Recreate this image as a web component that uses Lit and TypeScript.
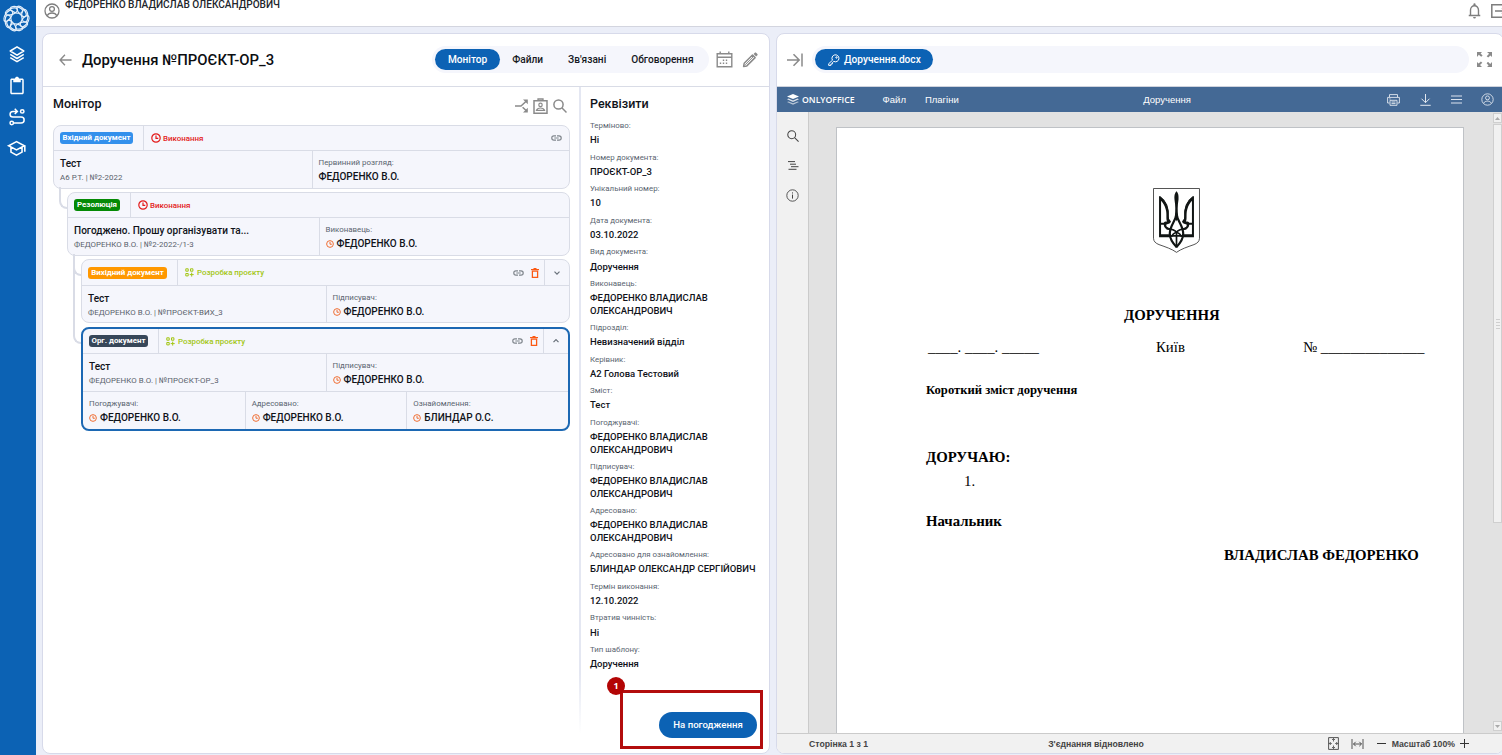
import { LitElement, html, css, svg, TemplateResult } from "lit";
import { customElement } from "lit/decorators.js";
import { classMap } from "lit/directives/class-map.js";

/* ---------- icons ---------- */

const glyph = (cls: string, box: string, body: unknown) =>
  html`<svg class="ico ${cls}" viewBox=${box} preserveAspectRatio="none">${body}</svg>`;

const logo = () =>
  glyph("logo", "-14 -14 28 28", svg`<g fill="none" stroke="#e4effb" stroke-width="1.3">
    ${[0, 36, 72, 108, 144, 180, 216, 252, 288, 324].map(
      (a) => svg`<ellipse cx="0" cy="-9" rx="6.600" ry="3.200" transform=${`rotate(${a}) rotate(14 0 -9)`}></ellipse>`
    )}</g>`);

const layers = () =>
  glyph("i18", "0 0 24 24", svg`<path fill="none" stroke="currentColor" stroke-width="2" stroke-linejoin="round"
    d="M12 2.5L21 8l-9 5.5L3 8zM3 12.5l9 5.5 9-5.5M3 16.8l9 5.5 9-5.5"></path>`);

const clipboard = () =>
  glyph("i20", "0 0 24 24", svg`<path fill="currentColor"
    d="M19 3h-4.2C14.4 1.8 13.3 1 12 1s-2.4.8-2.8 2H5c-1.1 0-2 .9-2 2v16c0 1.100.9 2 2 2h14c1.100 0 2-.9 2-2V5c0-1.100-.9-2-2-2zm0 18H5V5h2v3h10V5h2z"></path>`);

const route = () =>
  glyph("i18", "0 0 24 24", svg`<g fill="none" stroke="currentColor" stroke-width="2">
    <path d="M11 4.500H6.500a3.700 3.700 0 0 0 0 7.500h11a4 4 0 0 1 0 8H8M9 1l3.500 3.500L9 8"></path>
    <circle cx="19" cy="4.500" r="2.300"></circle><circle cx="5" cy="20" r="2.300"></circle></g>`);

const cap = () =>
  glyph("i19", "0 0 24 24", svg`<g fill="none" stroke="currentColor" stroke-width="2">
    <path d="M12 3.500L2 9l10 5.500L22 9zM5 11v6.500l7 4 7-4V11M22.500 9v8"></path></g>`);

const account = (cls: string, w = 1.9) =>
  glyph(cls, "0 0 24 24", svg`<g fill="none" stroke="currentColor" stroke-width=${w}>
    <circle cx="12" cy="12" r="10.500"></circle><circle cx="12" cy="9" r="3.600"></circle>
    <path d="M4.800 19c1.500-2.800 4-4 7.200-4s5.700 1.200 7.200 4"></path></g>`);

const back = () =>
  glyph("back-ico", "0 0 14 12", svg`<path fill="none" stroke="currentColor" stroke-width="1.500" d="M13.500 6H1.200M6.400.7L1.200 6l5.200 5.300"></path>`);

const toBar = () =>
  glyph("bar-ico", "0 0 16 14", svg`<path fill="none" stroke="currentColor" stroke-width="1.500" d="M0 7h12M6.500 1.200L12.200 7l-5.700 5.800M15 .5v13"></path>`);

const calendar = () =>
  glyph("cal-ico", "0 0 17 17", svg`<path fill="none" stroke="currentColor" stroke-width="1.400" d="M1.200 2.700h14.600v13H1.200zM1.200 6.300h14.600M4.200.5v2.500M12.800.5v2.500"></path>
    <path fill="none" stroke="currentColor" stroke-width="1.400" stroke-dasharray="1.400 1.600" d="M6.800 9.300h6M3.800 12.300h7.500"></path>`);

const pencil = () =>
  glyph("pen-ico", "0 0 16 16", svg`<path fill="none" stroke="currentColor" stroke-width="1.500" stroke-linejoin="round" d="M1.600 14.400l.6-3.100 8.300-8.300 2.600 2.600-8.300 8.300z"></path>
    <path fill="currentColor" d="M11.600 2l1.200-1.300c.4-.4.9-.4 1.300 0l1.300 1.300c.4.4.4.9 0 1.300l-1.300 1.200z"></path>
    <path stroke="currentColor" stroke-width=".9" d="M3.200 12.800l7.800-7.800"></path>`);

const split = () =>
  glyph("split-ico", "0 0 13 14", svg`<path fill="none" stroke="currentColor" stroke-width="1.500" d="M0 7h6l6-5.500M7.600 8.200L12 12.300"></path>
    <path fill="currentColor" d="M8 .5h4.800v4.800zM12.800 8.700v4.800H8z"></path>`);

const idBadge = () =>
  glyph("id-ico", "0 0 15 16", svg`<path fill="none" stroke="currentColor" stroke-width="1.500" d="M1 2.800h13v12.400H1z"></path>
    <path fill="none" stroke="currentColor" stroke-width="1.300" d="M5 2.500V1h5v1.500"></path>
    <circle cx="7.500" cy="6.900" r="1.700" fill="none" stroke="currentColor" stroke-width="1.200"></circle>
    <path fill="none" stroke="currentColor" stroke-width="1.200" d="M3.500 12.300c.6-1.700 2-2.300 4-2.300s3.400.6 4 2.300z"></path>`);

const search = (cls: string, w: number) =>
  glyph(cls, "0 0 14 14", svg`<g fill="none" stroke="currentColor" stroke-width=${w}><circle cx="5.500" cy="5.500" r="4.600"></circle><path d="M8.800 8.800l4.700 4.700"></path></g>`);

const link = () =>
  glyph("link-ico", "0 0 11 6", svg`<path fill="none" stroke="currentColor" stroke-width="1.200" d="M5 .8H3a2.200 2.200 0 0 0 0 4.400h2M6 .8h2a2.200 2.200 0 0 1 0 4.400H6M3.300 3h4.400"></path>`);

const trash = () =>
  glyph("trash-ico", "0 0 8 10", svg`<path fill="none" stroke="currentColor" stroke-width="1.300" d="M1.400 3v6.300h5.200V3"></path>
    <path stroke="currentColor" stroke-width="1.300" d="M0 1.600h8"></path><path stroke="currentColor" stroke-width="1.200" d="M2.500.6h3M1 3.100h6"></path>`);

const chevron = (up: boolean) =>
  glyph("chev-ico", "0 0 8 6", svg`<path fill="none" stroke="#68707a" stroke-width="1.200" d=${up ? "M1.500 4.200L4 1.700l2.500 2.500" : "M1.500 1.700L4 4.200l2.500-2.500"}></path>`);

const clock = (cls: string) =>
  glyph(cls, "0 0 10 10", svg`<g fill="none" stroke="currentColor" stroke-width="1.200"><circle cx="5" cy="5" r="4.200"></circle><path d="M5 2.400V5.300h2.300"></path></g>`);

const widgets = () =>
  glyph("wid-ico", "0 0 9 9", svg`<path fill="none" stroke="currentColor" stroke-width="1" d="M.8.8h2.400v2.400H.8zM5.500.8h2.400v2.400H5.500zM.8 5.500h2.400v2.400H.8zM6.700 4.600v4M4.700 6.600h4"></path>`);

const key = () =>
  glyph("key-ico", "0 0 12 12", svg`<g fill="none" stroke="currentColor" stroke-width="1"><path d="M4.500 6.200L.7 9.700v1.700h2.200V10h1.400V8.700l1.500-1.300A3.500 3.500 0 1 0 4.500 6.200z"></path><circle cx="8.500" cy="3.500" r=".7"></circle></g>`);

const bell = () =>
  glyph("bell-ico", "0 0 14 16", svg`<path fill="none" stroke="currentColor" stroke-width="1.500" d="M.8 12.600h12.400M2.700 12.500V7a4.300 4.300 0 0 1 8.600 0v5.500"></path>
    <path fill="currentColor" d="M5.800 2.800V1.400a1.200 1.200 0 0 1 2.400 0v1.400zM5.500 14h3a1.500 1.500 0 0 1-3 0z"></path>`);

const exit = () =>
  glyph("exit-ico", "0 0 16 14", svg`<path fill="none" stroke="currentColor" stroke-width="1.500" d="M13 4V.8H.8v12.400H13V10M4 7h10M11 4.200L14 7l-3 2.800"></path>`);

const expand = () =>
  glyph("expand-ico", "0 0 15 15", svg`<g fill="currentColor"><path d="M0 0h5L3.600 1.400l2 2-1.400 1.400-2.400-2L0 5zM15 0v5l-1.600-1.600-2.200 2.200-1.500-1.400 2.400-2.400L10 0zM0 15v-5l1.600 1.600 2.300-2.200 1.400 1.400-2.300 2.300L5 15zM15 15h-5l1.600-1.600-2-2.200 1.400-1.500 2.200 2.400L15 10z"></path></g>`);

const stack = () =>
  glyph("stack-ico", "0 0 12 11", svg`<g fill="#fff"><path d="M6 0l6 2.500L6 5 0 2.500z"></path><path opacity=".8" d="M1.500 4.600L6 6.500l4.500-1.900L12 5.300 6 7.900 0 5.300z"></path><path opacity=".6" d="M1.500 7.400L6 9.300l4.500-1.900L12 8.100 6 10.700 0 8.100z"></path></g>`);

const printer = () =>
  glyph("print-ico", "0 0 13 12", svg`<g fill="none" stroke="#e3e9f1" stroke-width=".9"><path d="M2.500 3V.6h8V3M2.500 9H.6V3.400h11.800V9h-1.900"></path><path d="M3 6.300h7v5H3z"></path><path d="M4.500 8h4M4.500 9.600h4M2.300 4.900h1.200"></path></g>`);

const download = () =>
  glyph("down-ico", "0 0 11 12", svg`<path fill="none" stroke="#e3e9f1" stroke-width="1" d="M5.500 0v8.500M1.500 4.700l4 4 4-4M.3 11.300h10.400"></path>`);

const lines = () =>
  glyph("menu-ico", "0 0 11 9", svg`<path fill="none" stroke="#dbe3ee" stroke-width="1" d="M0 1h11M0 4.500h11M0 8h11"></path>`);

const outline = () =>
  glyph("outline-ico", "0 0 12 9", svg`<path fill="none" stroke="#444" stroke-width="1" d="M1 .6h7M3 3.200h6M4 5.700h7.500M1.500 8.300h8"></path>`);

const info = () =>
  glyph("info-ico", "0 0 13 13", svg`<circle cx="6.500" cy="6.500" r="5.700" fill="none" stroke="#444" stroke-width=".9"></circle><path stroke="#444" stroke-width="1" d="M6.500 5.600v4M6.500 3.400v1.100"></path>`);

const fitPage = () =>
  glyph("fit-ico", "0 0 11 13", svg`<path fill="none" stroke="#444" stroke-width=".9" d="M.6.600h9.800v11.800H.6z"></path>
    <path fill="none" stroke="#444" stroke-width=".8" d="M5.500 1.500v3M5.500 11.500v-3M1.300 6.500h2.500M9.700 6.500H7.200M4 3l1.500-1.500L7 3M4 10l1.500 1.500L7 10M2.800 5L1.300 6.500 2.800 8M8.200 5l1.500 1.500L8.200 8"></path>`);

const fitWidth = () =>
  glyph("fitw-ico", "0 0 13 10", svg`<path fill="none" stroke="#444" stroke-width=".9" d="M1 0v10M12 0v10M2.500 5h8M4.700 2.800L2.500 5l2.200 2.200M8.300 2.800L10.500 5 8.300 7.200"></path>`);

/* Coat of arms: the right half mirrors the left one. */
const emblem = () => {
  const half = svg`
    <path fill="#111514" d="M18 24C36 34 48 58 47 84C47 93 49 96 52 98C54 106 46 108 40 109C38 116 44 118 52 120L50 126C38 124 32 118 32 110H24V138H50V147H18ZM24 38V104H32C33 101 36 100 42 100C38 92 42 78 38 64C35 53 30 44 24 38Z"></path>
    <path fill="none" stroke="#111514" stroke-width="6.500" d="M69 82C66 100 50 114 50 136C50 154 60 166 70 176"></path>
    <path fill="none" stroke="#111514" stroke-width="5" d="M40 121C56 122 66 126 70 132C60 136 56 142 55 146"></path>
    <path fill="none" stroke="#111514" stroke-width="3" d="M20 25C38 38 48 60 45 86C45 94 48 98 52 102"></path>`;
  return glyph("emblem", "0 0 140 194", svg`
    <path fill="#fff" stroke="#333" stroke-width="2.500" d="M1.500 1.500H138.500V150C138 160 132 165 122 169C102 176 84 182 70 192C56 182 38 176 18 169C8 165 2 160 1.500 150Z"></path>
    ${half}<g transform="translate(140 0) scale(-1 1)">${half}</g>
    <path fill="#111514" d="M70 10C66 14 63 20 64 34C67 54 67 66 65 84L70 100L75 84C73 66 73 54 76 34C77 20 74 14 70 10Z"></path>
    <path stroke="#111514" stroke-width="5" d="M70 128V178M44 143H96"></path>`);
};

/* ---------- data ---------- */

interface Person { label: string; name: string; pending?: boolean }
interface Card {
  depth: number; tone: string; badge: string; badgeWidth: number;
  status: "run" | "draft"; title: string; sub: string;
  person: Person; tools: string[]; open?: boolean; extra?: Person[];
}

const F = "ФЕДОРЕНКО В.О.";
const cards: Card[] = [
  { depth: 0, tone: "blue", badge: "Вхідний документ", badgeWidth: 73, status: "run", title: "Тест", sub: "А6 Р.Т. | №2-2022",
    person: { label: "Первинний розгляд:", name: F }, tools: ["link"] },
  { depth: 1, tone: "green", badge: "Резолюція", badgeWidth: 46, status: "run", title: "Погоджено. Прошу організувати та...", sub: "ФЕДОРЕНКО В.О. | №2-2022-/1-3",
    person: { label: "Виконавець:", name: F, pending: true }, tools: [] },
  { depth: 2, tone: "orange", badge: "Вихідний документ", badgeWidth: 79, status: "draft", title: "Тест", sub: "ФЕДОРЕНКО В.О. | №ПРОЄКТ-ВИХ_3",
    person: { label: "Підписувач:", name: F, pending: true }, tools: ["link", "trash", "chevron"] },
  { depth: 2, tone: "slate", badge: "Орг. документ", badgeWidth: 59, status: "draft", title: "Тест", sub: "ФЕДОРЕНКО В.О. | №ПРОЄКТ-ОР_3",
    person: { label: "Підписувач:", name: F, pending: true }, tools: ["link", "trash", "chevron"], open: true,
    extra: [
      { label: "Погоджувачі:", name: F, pending: true },
      { label: "Адресовано:", name: F, pending: true },
      { label: "Ознайомлення:", name: "БЛИНДАР О.С.", pending: true },
    ] },
];

const FULL = "ФЕДОРЕНКО ВЛАДИСЛАВ ОЛЕКСАНДРОВИЧ";
const details: [string, string][] = [
  ["Терміново:", "Ні"],
  ["Номер документа:", "ПРОЄКТ-ОР_3"],
  ["Унікальний номер:", "10"],
  ["Дата документа:", "03.10.2022"],
  ["Вид документа:", "Доручення"],
  ["Виконавець:", FULL],
  ["Підрозділ:", "Невизначений відділ"],
  ["Керівник:", "А2 Голова Тестовий"],
  ["Зміст:", "Тест"],
  ["Погоджувачі:", FULL],
  ["Підписувач:", FULL],
  ["Адресовано:", FULL],
  ["Адресовано для ознайомлення:", "БЛИНДАР ОЛЕКСАНДР СЕРГІЙОВИЧ"],
  ["Термін виконання:", "12.10.2022"],
  ["Втратив чинність:", "Ні"],
  ["Тип шаблону:", "Доручення"],
];

const base = css`
  * { box-sizing: border-box; }
  .ico { display: block; flex: none; overflow: visible; }
`;

/* ---------- document tree ---------- */

@customElement("document-card")
class DocumentCard extends LitElement {
  static properties = { card: { attribute: false } };
  declare card: Card;

  static styles = [base, css`
    :host { display: block; }
    .card { background: #f5f6fc; border: 1px solid #d9dce6; border-radius: 8px; overflow: hidden; }
    .card.open { border: 2px solid #1c68b3; }
    .head { display: flex; height: 25px; border-bottom: 1px solid #d9dce6; align-items: stretch; }
    .card.draft:not(.open) .head { height: 26px; }
    .type { display: flex; align-items: center; padding: 0 10px 0 6px; border-right: 1px solid #d9dce6; }
    .badge { height: 12px; border-radius: 3px; color: #fff; font-size: 7.9px; font-weight: 700; line-height: 12px; text-align: center; white-space: nowrap; }
    .blue { background: #3390ec; }
    .green { background: #058a05; }
    .orange { background: #ff9800; }
    .slate { background: #374759; }
    .status { display: flex; align-items: center; gap: 2px; padding-left: 7px; font-size: 7.9px; font-weight: 500; flex: 1; }
    .run { color: #e31b1b; }
    .draft-status { color: #a3c614; gap: 3px; }
    .tools { display: flex; align-items: center; gap: 7px; padding-right: 7px; color: #7f858c; }
    .tools.wide { padding-right: 5px; }
    .trash { color: #fb5a14; }
    .toggle { display: flex; align-items: center; justify-content: center; width: 25px; border-left: 1px solid #d9dce6; }
    .row { display: grid; grid-template-columns: 1fr 1fr; height: 37px; }
    .card.draft:not(.open) .row { height: 36px; }
    .open .main { height: 38px; border-bottom: 1px solid #d9dce6; }
    .three { grid-template-columns: 1fr 1fr 1fr; }
    .cell { padding: 5.500px 6px 0; min-width: 0; white-space: nowrap; }
    .cell + .cell { border-left: 1px solid #d9dce6; }
    .title { font-size: 10.050px; line-height: 14px; color: #10131a; font-weight: 500; }
    .sub { font-size: 7.9px; line-height: 13px; color: #59616b; letter-spacing: .05px; }
    .label { font-size: 7.9px; line-height: 12px; color: #59646f; }
    .name { display: flex; align-items: center; gap: 3px; font-size: 10px; line-height: 16px; color: #10131a; font-weight: 500; }
    .link-ico { width: 11px; height: 6px; }
    .trash-ico { width: 8px; height: 10px; }
    .chev-ico { width: 8px; height: 6px; }
    .clock10 { width: 10px; height: 10px; }
    .clock8 { width: 8px; height: 8px; color: #ef6a2c; }
    .wid-ico { width: 9px; height: 9px; }
  `];

  private person(p: Person) {
    return html`<div class="cell"><div class="label">${p.label}</div>
      <div class="name">${p.pending ? clock("clock8") : null}<span>${p.name}</span></div></div>`;
  }

  render() {
    const c = this.card;
    const full = c.tools.includes("chevron");
    return html`<div class=${classMap({ card: true, open: !!c.open, draft: c.status === "draft" })}>
      <div class="head">
        <div class="type"><div class="badge ${c.tone}" style="width:${c.badgeWidth}px">${c.badge}</div></div>
        ${c.status === "run"
          ? html`<div class="status run">${clock("clock10")}<span>Виконання</span></div>`
          : html`<div class="status draft-status">${widgets()}<span>Розробка проєкту</span></div>`}
        <div class=${classMap({ tools: true, wide: full })}>
          ${c.tools.includes("link") ? link() : null}
          ${c.tools.includes("trash") ? html`<span class="trash">${trash()}</span>` : null}
        </div>
        ${full ? html`<div class="toggle">${chevron(!!c.open)}</div>` : null}
      </div>
      <div class="row main">
        <div class="cell"><div class="title">${c.title}</div><div class="sub">${c.sub}</div></div>
        ${this.person(c.person)}
      </div>
      ${c.extra ? html`<div class="row three">${c.extra.map((p) => this.person(p))}</div>` : null}
    </div>`;
  }
}

/* ---------- application ---------- */

@customElement("app-root")
class AppRoot extends LitElement {
  static styles = [base, css`
    :host { display: block; width: 100%; height: 755px; overflow: hidden; font-family: Roboto, "Noto Sans", sans-serif; color: #10131a; }
    .app { display: grid; grid-template-columns: 36px 1fr; height: 755px; background: #ebeef8; }
    .side { background: #0c62b4; color: #fff; display: flex; flex-direction: column; align-items: center; padding: 5px 3px 0 0; }
    .logo { width: 27px; height: 27px; margin-bottom: 1px; }
    .nav { display: flex; flex-direction: column; align-items: center; gap: 13px; padding-top: 12px; }
    .i18 { width: 18px; height: 18px; }
    .i19 { width: 19px; height: 18px; }
    .i20 { width: 18px; height: 19px; }
    .content { display: flex; flex-direction: column; min-width: 0; }
    .top { height: 27px; background: #fff; border-bottom: 1px solid #d3d5df; display: flex; color: #7d7d7d; padding-left: 8px; overflow-x: clip; }
    .user-ico { width: 16px; height: 16px; margin-top: 3px; }
    .user { margin-left: 5px; font-size: 10.100px; font-weight: 500; line-height: 9px; color: #22262c; flex: 1; letter-spacing: -.02px; }
    .bell-ico { width: 13px; height: 16px; margin: 3px 10px 0 0; }
    .exit-ico { width: 16px; height: 14px; margin: 4px -5px 0 0; }
    .panels { display: grid; grid-template-columns: 728px 1fr; gap: 6px; padding: 6px 0 1px 6px; flex: 1; min-height: 0; }
    .panel { background: #fff; border: 1px solid #d7daea; border-radius: 8px; min-width: 0; display: flex; flex-direction: column; overflow: hidden; }
    .right { margin-right: -2px; }
    .bar { height: 53px; flex: none; border-bottom: 1px solid #d9dce6; display: flex; align-items: center; color: #8a8a8a; }
    .left .bar { padding: 0 11px 1px 16px; }
    .back-ico { width: 13px; height: 12px; }
    .h1 { font-size: 14.870px; font-weight: 500; color: #0c0e12; margin-left: 10px; flex: 1; white-space: nowrap; }
    .tabs { display: flex; align-items: center; height: 27px; background: #f5f6fc; border-radius: 14px; padding: 0 3px; }
    .tab { height: 21px; line-height: 21px; padding: 0 12.500px; border-radius: 11px; font-size: 10.150px; font-weight: 500; color: #16191f; white-space: nowrap; }
    .tab.on { background: #0c62b4; color: #fff; }
    .cal-ico { width: 17px; height: 17px; margin-left: 7px; }
    .pen-ico { width: 16px; height: 16px; margin-left: 9px; }
    .body { flex: 1; display: grid; grid-template-columns: 536px 1fr; min-height: 0; }
    .monitor { padding: 9px 9px 0 10px; }
    .section { font-size: 12.500px; font-weight: 500; line-height: 15px; }
    .section-row { display: flex; justify-content: space-between; height: 29px; }
    .acts { display: flex; color: #8a8a8a; gap: 5px; padding: 2px 3px 0 0; }
    .split-ico { width: 13px; height: 14px; margin-top: 1px; }
    .id-ico { width: 15px; height: 16px; }
    .search-l { width: 14px; height: 14px; margin-top: 1px; }
    .tree { display: flex; flex-direction: column; gap: 3px; }
    .node { position: relative; }
    .d1 { margin-left: 14px; }
    .d2 { margin-left: 28px; }
    .last { margin-top: 1px; }
    .node.d1::before, .node.d2::before { content: ""; position: absolute; left: -8px; bottom: calc(100% - 17px); width: 10px; height: 20px; border-left: 2px solid #d9dce6; border-bottom: 2px solid #d9dce6; border-bottom-left-radius: 8px; }
    .node.last::before { height: 88px; }
    document-card { position: relative; }
    .details { border-left: 2px solid; border-image: linear-gradient(#e4e7f2 88%, #fff 97%) 1; padding: 9px 8px 0 9px; display: flex; flex-direction: column; position: relative; }
    .list { padding-top: 9px; display: flex; flex-direction: column; }
    .field { padding-bottom: 4.700px; }
    .k { font-size: 7.900px; line-height: 11px; color: #5a6570; height: 13.700px; }
    .v { font-size: 9.500px; line-height: 12.600px; font-weight: 500; padding-top: .6px; }
    .submit { position: absolute; right: 12px; bottom: 15px; width: 98px; height: 26px; line-height: 26px; border-radius: 13px; background: #0c62b4; color: #fff; font-size: 9.600px; font-weight: 500; text-align: center; white-space: nowrap; }
    .mark { position: absolute; right: 6px; bottom: 4px; width: 143px; height: 59px; border: 3px solid #b30d0d; }
    .count { position: absolute; left: -16px; top: -16px; width: 18px; height: 18px; border-radius: 50%; background: #b30505; color: #fff; font: 700 9px/18px "Open Sans", sans-serif; text-align: center; }

    .right .bar { padding: 0 10px 1px 10px; border-bottom-color: #cfd3dd; }
    .bar-ico { width: 16px; height: 14px; }
    .files { flex: 1; margin: 0 8px 0 9px; }
    .file { display: flex; align-items: center; gap: 4px; width: 118px; padding: 0 0 0 13px; }
    .key-ico { width: 12px; height: 12px; }
    .expand-ico { width: 15px; height: 15px; margin-right: 1px; }
    .office { height: 25px; flex: none; background: #446995; color: #fff; display: grid; grid-template-columns: 1fr auto 1fr; align-items: center; font: 9.500px "Liberation Sans", Arial, sans-serif; padding: 0 9px 0 10px; }
    .doc-name { padding-left: 53px; }
    .menu { display: flex; align-items: center; }
    .stack-ico { width: 12px; height: 11px; }
    .brand { font: 600 8.700px "Open Sans", sans-serif; margin: 0 28px 0 3px; }
    .menu .item { margin-right: 19px; }
    .office-acts { display: flex; align-items: center; justify-content: flex-end; }
    .print-ico { width: 13px; height: 12px; margin-right: 20px; }
    .down-ico { width: 11px; height: 12px; margin-right: 20px; }
    .menu-ico { width: 11px; height: 9px; margin-right: 19px; }
    .acc13 { width: 13px; height: 13px; color: #e3e9f1; }
    .work { flex: 1; display: grid; grid-template-columns: 32px 1fr; min-height: 0; }
    .strip { background: #f1f1f1; border-right: 1px solid #cbcbcb; display: flex; flex-direction: column; align-items: center; padding-top: 18px; color: #444; }
    .search-s { width: 12px; height: 12px; }
    .outline-ico { width: 12px; height: 9px; margin-top: 19px; }
    .info-ico { width: 13px; height: 13px; margin-top: 19px; }
    .canvas { background: #e2e2e2; display: grid; grid-template-columns: 1fr 9px; padding: 0 1px 0 27px; min-height: 0; overflow: hidden; }
    .page { width: 628px; margin-top: 15px; background: #fff; border: 1px solid #bfc2c6; border-bottom: 0; padding: 60px 0 0 89px; font-family: "Liberation Serif", "Times New Roman", serif; color: #000; font-size: 14.800px; line-height: 18px; display: flex; flex-direction: column; align-items: flex-start; }
    .emblem { width: 47px; height: 65px; margin-left: 227px; }
    .doc-title { font-weight: 700; margin: 53px 0 0 198px; }
    .issue { display: flex; margin-top: 14px; width: 500px; white-space: pre; }
    .issue .date { width: 230px; padding-left: 2px; }
    .issue .city { width: 147px; }
    .short { font-size: 12.650px; font-weight: 700; margin-top: 25px; }
    .order { font-weight: 700; margin-top: 49px; }
    .point { margin: 6px 0 0 38px; }
    .boss { font-weight: 700; margin-top: 22px; }
    .sign { font-weight: 700; margin: 16px 0 0 298px; white-space: nowrap; }
    .scroll { display: flex; flex-direction: column; padding: 1px 0 2px; }
    .arrow { height: 10px; border: 1px solid #cfcfcf; background: #f1f1f1; display: flex; align-items: center; justify-content: center; flex: none; }
    .tri { width: 5px; height: 3px; }
    .thumb { height: 399px; margin: 1px 0 auto; border: 1px solid #cfcfcf; background: #f1f1f1; display: flex; flex-direction: column; align-items: center; justify-content: center; gap: 2px; }
    .grip { width: 4px; height: 1px; background: #cfcfcf; }
    .foot { height: 20px; flex: none; background: #f1f1f1; border-top: 1px solid #cbcbcb; color: #444; display: grid; grid-template-columns: 1fr auto 1fr; align-items: center; font: 700 8.700px "Liberation Sans", Arial, sans-serif; padding: 0 34px 0 32px; }
    .conn { padding-right: 86px; }
    .zoom { display: flex; align-items: center; justify-content: flex-end; white-space: nowrap; }
    .fit-ico { width: 11px; height: 13px; margin-right: 12px; }
    .fitw-ico { width: 13px; height: 10px; margin-right: 13px; }
    .pm { width: 9px; height: 9px; }
    .scale { margin: 0 5px 0 6px; }
  `];

  private tabs() {
    return ["Монітор", "Файли", "Зв'язані", "Обговорення"].map(
      (t, i) => html`<div class=${classMap({ tab: true, on: i === 0 })}>${t}</div>`
    );
  }

  private leftPanel(): TemplateResult {
    return html`<section class="panel left">
      <div class="bar">${back()}<div class="h1">Доручення №ПРОЄКТ-ОР_3</div>
        <div class="tabs">${this.tabs()}</div>${calendar()}${pencil()}</div>
      <div class="body">
        <div class="monitor">
          <div class="section-row"><div class="section">Монітор</div>
            <div class="acts">${split()}${idBadge()}${search("search-l", 1.5)}</div></div>
          <div class="tree">
            ${cards.map((c, i) => html`<div class="node d${c.depth} ${i === cards.length - 1 ? "last" : ""}">
              <document-card .card=${c}></document-card></div>`)}
          </div>
        </div>
        <div class="details">
          <div class="section">Реквізити</div>
          <div class="list">${details.map(([k, v]) => html`<div class="field"><div class="k">${k}</div><div class="v">${v}</div></div>`)}</div>
          <div class="submit">На погодження</div>
          <div class="mark"><div class="count">1</div></div>
        </div>
      </div>
    </section>`;
  }

  private rightPanel(): TemplateResult {
    const tri = (d: string) => html`<svg class="ico tri" viewBox="0 0 5 3"><path fill="#aaa" d=${d}></path></svg>`;
    const pm = (d: string) => glyph("pm", "0 0 9 9", svg`<path stroke="#333" stroke-width="1" d=${d}></path>`);
    return html`<section class="panel right">
      <div class="bar">${toBar()}
        <div class="tabs files"><div class="tab on file">${key()}<span>Доручення.docx</span></div></div>${expand()}</div>
      <div class="office">
        <div class="menu">${stack()}<span class="brand">ONLYOFFICE</span><span class="item">Файл</span><span class="item">Плагіни</span></div>
        <div class="doc-name">Доручення</div>
        <div class="office-acts">${printer()}${download()}${lines()}${account("acc13", 1.6)}</div>
      </div>
      <div class="work">
        <div class="strip">${search("search-s", 1.2)}${outline()}${info()}</div>
        <div class="canvas">
          <div class="page">
            ${emblem()}
            <div class="doc-title">ДОРУЧЕННЯ</div>
            <div class="issue"><div class="date">____. ____. _____</div><div class="city">Київ</div><div>№ ______________</div></div>
            <div class="short">Короткий зміст доручення</div>
            <div class="order">ДОРУЧАЮ:</div>
            <div class="point">1.</div>
            <div class="boss">Начальник</div>
            <div class="sign">ВЛАДИСЛАВ ФЕДОРЕНКО</div>
          </div>
          <div class="scroll">
            <div class="arrow">${tri("M0 3L2.500 0 5 3z")}</div>
            <div class="thumb">${[0, 1, 2, 3].map(() => html`<div class="grip"></div>`)}</div>
            <div class="arrow">${tri("M0 0h5L2.500 3z")}</div>
          </div>
        </div>
      </div>
      <div class="foot"><div>Сторінка 1 з 1</div><div class="conn">З'єднання відновлено</div>
        <div class="zoom">${fitPage()}${fitWidth()}${pm("M0 4.500h9")}<span class="scale">Масштаб 100%</span>${pm("M0 4.500h9M4.500 0v9")}</div></div>
    </section>`;
  }

  render() {
    return html`<div class="app">
      <nav class="side">${logo()}<div class="nav">${layers()}${clipboard()}${route()}${cap()}</div></nav>
      <div class="content">
        <header class="top">${account("user-ico")}<div class="user">${FULL}</div>${bell()}${exit()}</header>
        <main class="panels">${this.leftPanel()}${this.rightPanel()}</main>
      </div>
    </div>`;
  }
}
